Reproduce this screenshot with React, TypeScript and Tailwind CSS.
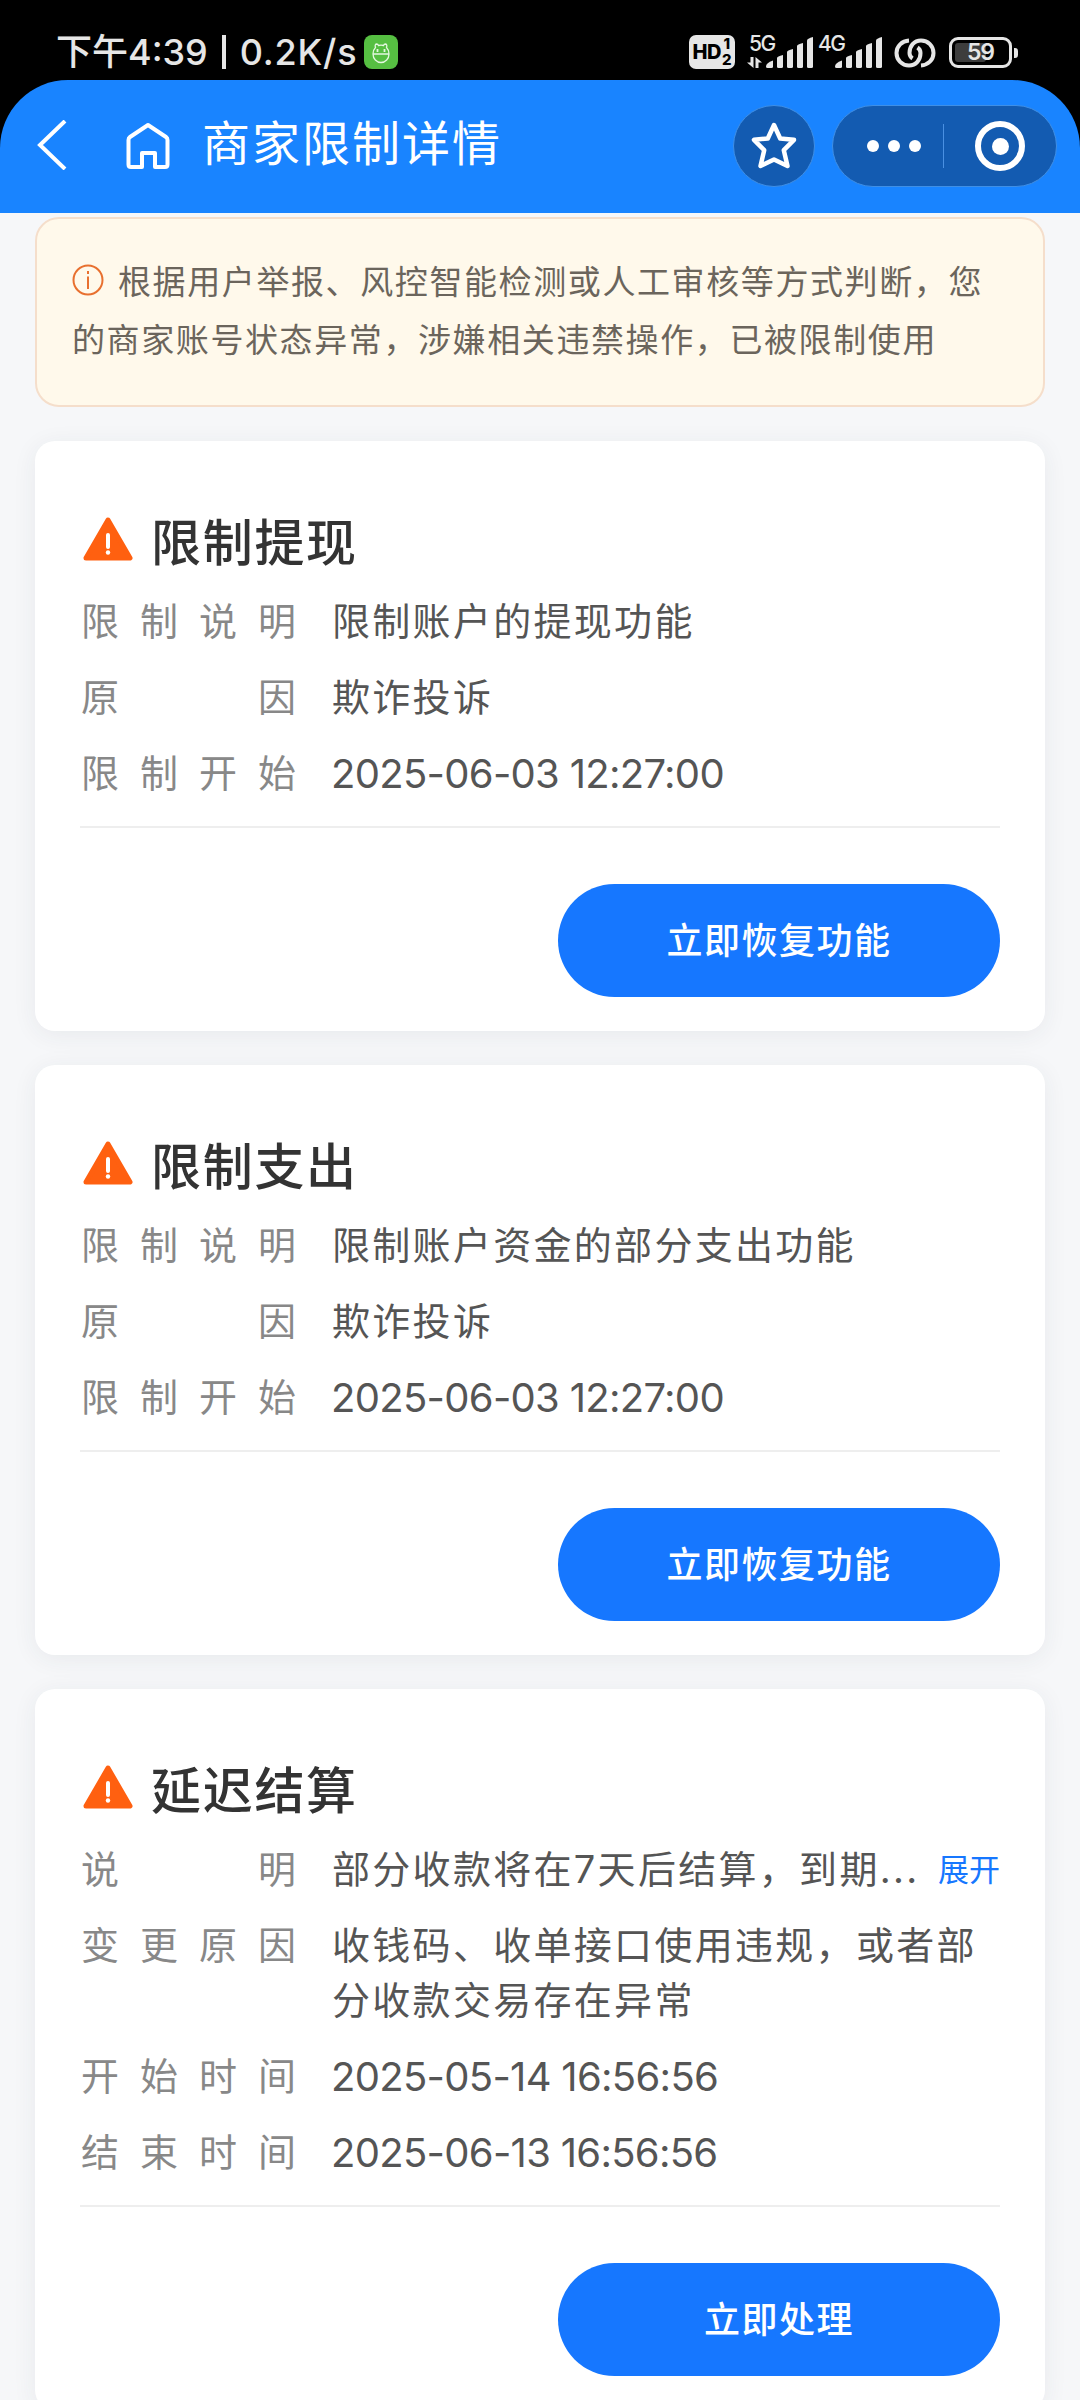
import clsx from "clsx";

type Row = { label: string; value: string; more?: boolean };
type Restriction = { title: string; rows: Row[]; action: string };

const restrictions: Restriction[] = [
  {
    title: "限制提现",
    rows: [
      { label: "限制说明", value: "限制账户的提现功能" },
      { label: "原因", value: "欺诈投诉" },
      { label: "限制开始", value: "2025-06-03 12:27:00" },
    ],
    action: "立即恢复功能",
  },
  {
    title: "限制支出",
    rows: [
      { label: "限制说明", value: "限制账户资金的部分支出功能" },
      { label: "原因", value: "欺诈投诉" },
      { label: "限制开始", value: "2025-06-03 12:27:00" },
    ],
    action: "立即恢复功能",
  },
  {
    title: "延迟结算",
    rows: [
      { label: "说明", value: "部分收款将在7天后结算，到期...", more: true },
      { label: "变更原因", value: "收钱码、收单接口使用违规，或者部分收款交易存在异常" },
      { label: "开始时间", value: "2025-05-14 16:56:56" },
      { label: "结束时间", value: "2025-06-13 16:56:56" },
    ],
    action: "立即处理",
  },
];

function SignalBars() {
  return (
    <svg className="h-[31px] w-[48px]" viewBox="0 0 48 31" fill="#e6e6e6">
      <path d="M0 29.5 Q0 26 7 23.500V29.500Q7 31 5.500 31H1.500Q0 31 0 29.500Z" />
      <path d="M11 21 Q11 19.500 17 18V29.500Q17 31 15.500 31H12.500Q11 31 11 29.500Z" />
      <path d="M21 15 Q21 13.500 27 12V29.500Q27 31 25.500 31H22.500Q21 31 21 29.500Z" />
      <path d="M31 9 Q31 7.500 37 6V29.500Q37 31 35.500 31H32.500Q31 31 31 29.500Z" />
      <path d="M41 3.500 Q41 1.500 47 0V29.500Q47 31 45.500 31H42.500Q41 31 41 29.500Z" />
    </svg>
  );
}

function StatusBar() {
  return (
    <div className="flex h-20 items-start bg-black pt-[35px] pl-[56px] text-[#e6e6e6]">
      <div className="flex h-[34px] w-[308px] items-center text-[36px] leading-none font-medium whitespace-pre">
        <span>下午4:39</span>
        <span className="mx-[14px] h-[34px] w-[4px] bg-[#e6e6e6]" />
        <span className="tracking-[0.800px]">0.2K/s</span>
      </div>
      <svg className="h-[34px] w-[34px]" viewBox="0 0 34 34" fill="none">
        <rect width="34" height="34" rx="8" fill="#56bf42" />
        <path
          d="M9 19a8 8.500 0 0 0 16 0q0-4-2.500-6.500q1-3-1-3.500q-1.500 0-2 1.500q-2.500-.7-5 0q-.5-1.500-2-1.500q-2 .5-1 3.500Q9 15 9 19ZM9 19h16"
          stroke="#e4f7df"
          strokeWidth="1.300"
        />
        <path d="M13.500 14v3M20.500 14v3" stroke="#e4f7df" strokeWidth="1.800" />
      </svg>

      <div className="ml-[291px] flex h-[34px] w-[46px] items-center justify-center gap-px rounded-[7px] bg-[#e6e6e6] text-black">
        <span className="text-[20px] leading-none font-extrabold tracking-[-0.500px]">HD</span>
        <span className="flex flex-col items-center text-[15px] leading-[16px] font-extrabold">
          <span>1</span>
          <span>2</span>
        </span>
      </div>

      <div className="relative ml-[12px] h-[34px] w-[66px]">
        <span className="absolute top-0 left-[2px] text-[21px] leading-[17px] font-medium tracking-[-1.500px]">5G</span>
        <svg className="absolute top-[22px] left-0 h-[11px] w-[15px]" viewBox="0 0 15 11" fill="#e6e6e6">
          <path d="M3.500 0h3v11L0 5.500h3.500ZM8.500 0v11h3V5.500H15Z" />
        </svg>
        <div className="absolute top-[2px] left-[19px]">
          <SignalBars />
        </div>
      </div>
      <div className="relative ml-[5px] h-[34px] w-[66px]">
        <span className="absolute top-0 left-0 text-[21px] leading-[17px] font-medium tracking-[-1.500px]">4G</span>
        <div className="absolute top-[2px] left-[17px]">
          <SignalBars />
        </div>
      </div>

      {/* two interlocked rings, each left open where the other passes */}
      <svg className="mt-[3px] ml-[10px] h-[30px] w-[42px]" viewBox="0 0 42 30" fill="none" stroke="#e6e6e6" strokeWidth="4">
        <path d="M15 2.500C8 3 2.500 8 2.500 15S8 27.500 15 27.500S26.500 22 26.500 15q0-3.500-3-5.500" />
        <path d="M27 27.500C34 27 39.500 22 39.500 15S34 2.500 27 2.500S15.500 8 15.500 15q0 3.500 3 5.500" />
      </svg>

      <div className="mt-[2px] ml-[13px] flex items-center">
        <div className="relative flex h-[31px] w-[63px] items-center justify-center rounded-[9px] border-3 border-[#e6e6e6]">
          <div className="absolute top-[3px] left-[3px] h-[19px] w-[31px] rounded-[3px] bg-[#3d3d3d]" />
          <span className="relative text-[23px] leading-none font-semibold tracking-[-1px]">59</span>
        </div>
        <div className="ml-[2px] h-[10px] w-[4px] rounded-r-[3px] bg-[#e6e6e6]" />
      </div>
    </div>
  );
}

function NavBar() {
  return (
    <div className="bg-black">
      <div className="flex h-[133px] items-start rounded-t-[68px] bg-[#1984ff] pt-[25px] pl-[36px] text-white">
        <svg className="mt-[15px] h-[50px] w-[32px]" viewBox="0 0 32 50" fill="none" stroke="currentColor" strokeWidth="4">
          <path d="M29 1L4 25L29 49" />
        </svg>
        <svg
          className="mt-[17px] ml-[57px] h-[48px] w-[46px]"
          viewBox="0 0 46 48"
          fill="none"
          stroke="currentColor"
          strokeWidth="4"
          strokeLinejoin="round"
        >
          <path d="M3.500 18Q3.500 16 5 15L23 3L41 15Q42.500 16 42.500 18V42.500Q42.500 45 40 45H30V31H17V45H6Q3.500 45 3.500 42.500Z" />
        </svg>
        <h1 className="mt-[3px] ml-[31px] w-[531px] text-[48px] leading-[72px] tracking-[2px]">商家限制详情</h1>
        <div className="flex h-[82px] w-[82px] items-center justify-center rounded-full border border-[#3f8fe6] bg-[#135bb1]">
          <svg className="h-[50px] w-[48px]" viewBox="0 0 48 50" fill="none" stroke="currentColor" strokeWidth="4.500" strokeLinejoin="round">
            <path d="M24 4L30.200 17.500L44 18.800L33.800 29.200L37.500 45L24 38.500L10.500 45L14.200 29.200L4 18.800L17.800 17.500Z" />
          </svg>
        </div>
        <div className="ml-[17px] flex h-[82px] w-[225px] items-center rounded-full border border-[#3f8fe6] bg-[#135bb1] pl-[34px]">
          <div className="flex gap-[9px]">
            <span className="h-[12px] w-[12px] rounded-full bg-white" />
            <span className="h-[12px] w-[12px] rounded-full bg-white" />
            <span className="h-[12px] w-[12px] rounded-full bg-white" />
          </div>
          <span className="ml-[22px] h-[44px] w-px bg-[#4a90e2]" />
          <div className="ml-[31px] flex h-[50px] w-[50px] items-center justify-center rounded-full border-6 border-white">
            <span className="h-[17px] w-[17px] rounded-full bg-white" />
          </div>
        </div>
      </div>
    </div>
  );
}

function Notice() {
  return (
    <div className="h-[190px] rounded-[24px] border-2 border-[#f5decb] bg-[#fff9eb] pt-[34px] pl-[35px] text-[#6b655c]">
      <p className="w-[930px] text-[33px] leading-[58px] tracking-[1.600px]">
        <svg className="mt-[-11px] mr-[14px] inline h-[32px] w-[32px]" viewBox="0 0 32 32" fill="none" stroke="#e8702f" strokeWidth="2">
          <circle cx="16" cy="16" r="14.500" />
          <path d="M16 12.500V25M16 7V10" />
        </svg>
        根据用户举报、风控智能检测或人工审核等方式判断，您
        <br />
        的商家账号状态异常，涉嫌相关违禁操作，已被限制使用
      </p>
    </div>
  );
}

function WarningIcon() {
  return (
    <svg className="mt-[5px] h-[45px] w-[50px]" viewBox="0 0 50 45">
      <path
        d="M25 3L47 41H3Z"
        fill="#ff6010"
        stroke="#ff6010"
        strokeWidth="5"
        strokeLinejoin="round"
      />
      <path d="M25 18V30" stroke="#fff" strokeWidth="4" strokeLinecap="round" />
      <circle cx="25" cy="35.500" r="2.200" fill="#fff" />
    </svg>
  );
}

function RestrictionCard({ item }: { item: Restriction }) {
  return (
    <section className="rounded-[20px] bg-white px-[45px] pt-[71px] pb-[34px] shadow-[0_4px_24px_rgba(40,50,70,0.07)]">
      <div className="flex h-[60px] pl-[3px]">
        <WarningIcon />
        <h2 className="mt-px ml-[18px] text-[50px] leading-[60px] font-medium tracking-[1.700px] text-[#333]">{item.title}</h2>
      </div>
      <dl className="mt-[22px] flex flex-col gap-[21px] pl-px text-[38px] leading-[55px]">
        {item.rows.map((row) => (
          <div key={row.label} className="flex">
            <dt className="flex w-[215px] shrink-0 justify-between text-[#888]">
              {[...row.label].map((char) => (
                <span key={char}>{char}</span>
              ))}
            </dt>
            <dd
              className={clsx(
                "text-[#555]",
                /^\d{4}-/.test(row.value) ? "ml-[35px] text-[40px] tracking-[-0.700px]" : "ml-[36px] tracking-[2.300px]",
                row.more ? "whitespace-nowrap" : "w-[660px]",
              )}
            >
              {row.value}
            </dd>
            {row.more && (
              <button className="ml-auto text-[31px] leading-[55px] text-[#1677ff]">展开</button>
            )}
          </div>
        ))}
      </dl>
      <hr className="mt-[25px] border-t-2 border-[#eee]" />
      <button className="mt-[56px] ml-auto block h-[113px] w-[442px] rounded-full bg-[#1677ff] text-[36px] font-medium tracking-[1.500px] text-white">
        {item.action}
      </button>
    </section>
  );
}

export default function App() {
  return (
    <div className="h-[2400px] w-[1080px] overflow-hidden bg-[#f6f7f9] font-[Inter,'Noto_Sans_CJK_SC',sans-serif]">
      <StatusBar />
      <NavBar />
      <main className="flex flex-col gap-[34px] px-[35px] pt-[4px]">
        <Notice />
        {restrictions.map((item) => (
          <RestrictionCard key={item.title} item={item} />
        ))}
      </main>
    </div>
  );
}
